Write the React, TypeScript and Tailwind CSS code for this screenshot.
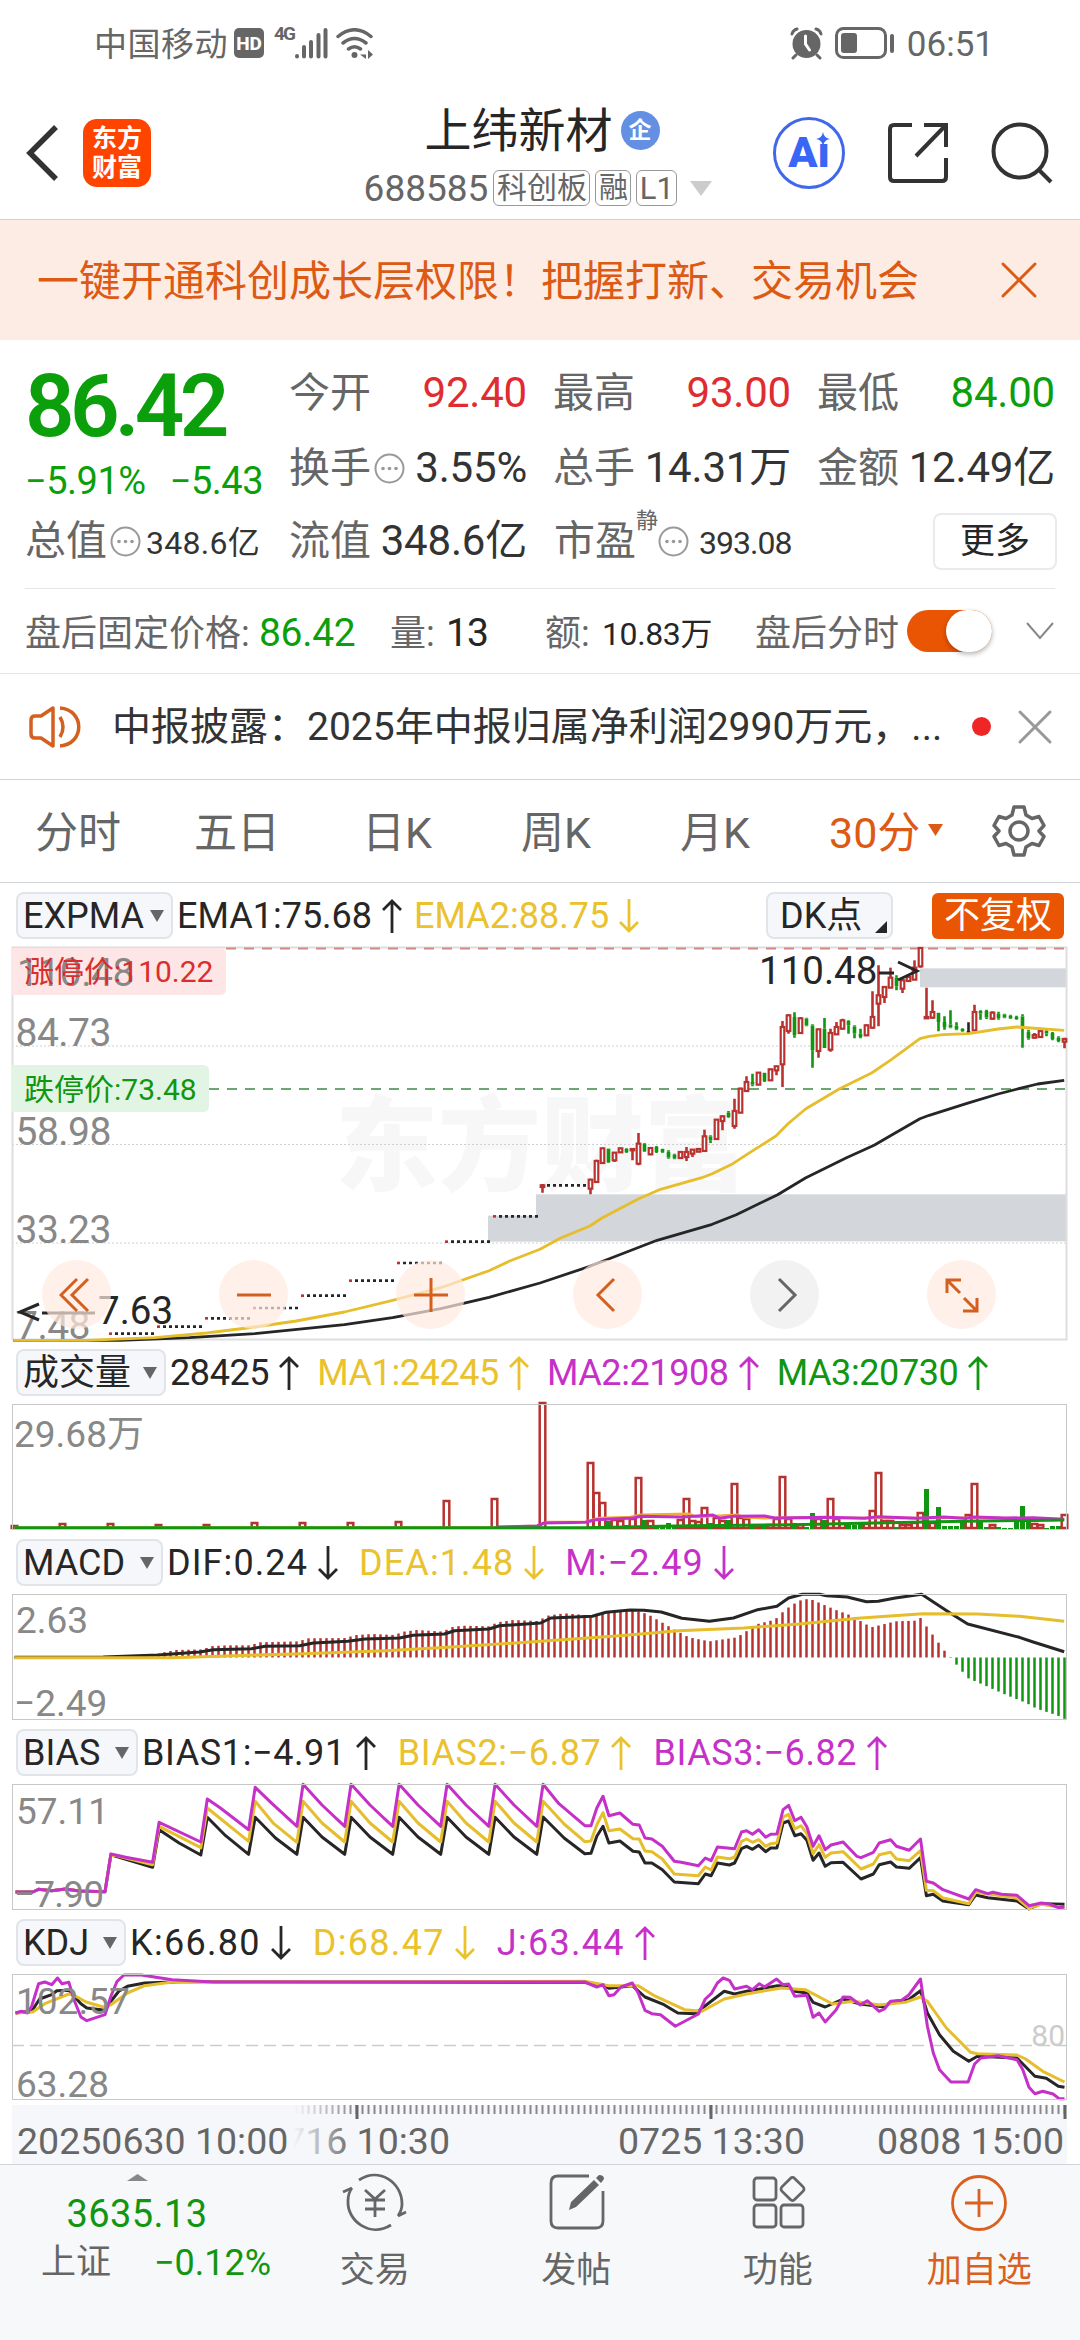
import type { ReactNode } from "react";
import { X } from "lucide-react";

type Point = [number, number];

const RED = "#b83330";
const GREEN = "#109610";
const BLACK = "#262626";
const YELLOW = "#e6bd2a";
const PURPLE = "#c531c8";

// chart data is kept on a fine grid, 3136 units wide and 3 units per pixel high
const gx = (x: number) => x / 2.9037 - 12;
const line = (points: Point[], top: number) =>
    points.map(([x, y]) => `${gx(x).toFixed(1)},${((y - top) / 3).toFixed(1)}`).join(" ");
const right = (points: Point[]): Point[] => points.map(([x, y]) => [x + 1568, y]);
const wide = (points: Point[]): Point[] => points.map(([x, y]) => [x * 2, y]);
const barX = (i: number) => 2.5 + i * 6;

// index, colour, high, body top, body bottom, low
const candles: [number, string, number, number, number, number][] = [
    [88, "r", 912, 915, 920, 937], [96, "r", 895, 898, 925, 942], [97, "r", 838, 842, 905, 905],
    [98, "r", 802, 804, 848, 848], [99, "g", 805, 805, 846, 848], [100, "r", 815, 817, 840, 845],
    [101, "r", 802, 804, 816, 816], [102, "g", 804, 806, 816, 818], [103, "r", 805, 806, 810, 840],
    [104, "r", 758, 790, 850, 855], [105, "g", 788, 790, 813, 815], [106, "r", 800, 803, 822, 825],
    [107, "g", 797, 800, 815, 818], [108, "g", 805, 806, 816, 818], [109, "g", 810, 814, 832, 835],
    [110, "g", 820, 823, 834, 837], [111, "r", 812, 815, 833, 835], [112, "r", 800, 815, 830, 842],
    [113, "r", 806, 808, 820, 830], [114, "r", 804, 806, 814, 816], [115, "r", 748, 768, 812, 812],
    [116, "g", 765, 768, 780, 788], [117, "r", 716, 718, 776, 776], [118, "r", 705, 708, 722, 750],
    [119, "g", 692, 697, 710, 712], [120, "r", 655, 692, 737, 745], [121, "r", 622, 625, 697, 697],
    [122, "r", 588, 605, 632, 635], [123, "g", 580, 605, 613, 618], [124, "r", 575, 577, 613, 613],
    [125, "g", 577, 578, 602, 605], [126, "r", 565, 567, 600, 600], [127, "r", 556, 558, 570, 585],
    [128, "r", 422, 440, 552, 620], [129, "r", 402, 405, 452, 460], [130, "g", 396, 410, 465, 472],
    [131, "r", 410, 414, 458, 458], [132, "g", 412, 414, 436, 438], [133, "g", 432, 435, 510, 562],
    [134, "r", 445, 447, 512, 532], [135, "g", 413, 445, 503, 503], [136, "r", 445, 458, 508, 514],
    [137, "r", 425, 440, 462, 462], [138, "r", 415, 420, 445, 448], [139, "g", 420, 422, 435, 460],
    [140, "g", 435, 438, 460, 474], [141, "g", 445, 460, 470, 474], [142, "r", 432, 435, 465, 465],
    [143, "r", 333, 410, 442, 445], [144, "r", 255, 345, 370, 438], [145, "r", 318, 320, 350, 368],
    [146, "r", 262, 292, 322, 322], [147, "g", 285, 292, 318, 330], [148, "r", 295, 300, 325, 338],
    [149, "r", 285, 290, 302, 305], [150, "r", 240, 262, 298, 298], [151, "r", 202, 203, 258, 262],
    [152, "r", 322, 410, 414, 416], [153, "r", 360, 395, 412, 415], [154, "g", 397, 398, 425, 453],
    [155, "g", 408, 425, 440, 448], [156, "g", 390, 432, 442, 444], [157, "g", 426, 436, 448, 450],
    [158, "g", 444, 446, 452, 454], [159, "k", 426, 452, 456, 458], [160, "r", 373, 395, 450, 453],
    [161, "g", 390, 392, 400, 418], [162, "g", 388, 392, 412, 416], [163, "r", 393, 397, 415, 418],
    [164, "g", 394, 400, 414, 418], [165, "g", 400, 402, 412, 414], [166, "g", 403, 406, 414, 416],
    [167, "g", 406, 410, 416, 418], [168, "g", 402, 408, 440, 502], [169, "g", 448, 454, 474, 478],
    [170, "r", 458, 464, 472, 475], [171, "r", 450, 452, 470, 472], [172, "g", 450, 452, 460, 468],
    [173, "g", 455, 458, 476, 480], [174, "g", 468, 472, 482, 486], [175, "r", 472, 476, 484, 504],
];

// first bar of each limit-up day and the level it stays on
const steps: Point[] = [
    [16, 1360], [24, 1339], [32, 1314], [40, 1283], [48, 1246], [56, 1201], [64, 1148], [72, 1084], [80, 1008], [88, 915],
];

const ema1: Point[] = [
    [38, 1380], [350, 1380], [550, 1372], [740, 1360], [1000, 1333], [1140, 1312], [1280, 1285], [1420, 1251], [1568, 1208],
    ...right([[145, 1158], [340, 1080], [500, 1032], [570, 1003], [690, 943], [772, 892], [890, 832], [970, 795], [1020, 765], [1103, 715], [1130, 705], [1240, 669], [1330, 641], [1390, 625], [1445, 611], [1522, 600]]),
];
const ema2: Point[] = [
    [38, 1380], [250, 1380], [450, 1372], [600, 1358], [740, 1340], [860, 1322], [1000, 1295], [1140, 1260], [1280, 1222], [1420, 1171], [1480, 1142], [1555, 1112],
    ...right([[0, 1107], [60, 1073], [145, 1037], [180, 1013], [285, 956], [350, 927], [470, 892], [500, 880], [560, 850], [600, 823], [685, 767], [720, 730], [772, 685], [870, 625], [963, 578], [1020, 538], [1103, 475], [1130, 468], [1170, 463], [1245, 460], [1330, 446], [1385, 440], [1522, 450]]),
];

const volumes: [number, string, number][] = [
    [0, "r", 2], [8, "r", 4], [16, "r", 4], [24, "r", 3], [32, "r", 3], [40, "r", 5], [48, "r", 5], [56, "r", 5], [64, "r", 6],
    [72, "r", 27], [80, "r", 29], [88, "r", 125], [96, "r", 65], [97, "r", 35], [98, "r", 25], [99, "g", 8], [100, "r", 8],
    [101, "r", 7], [102, "g", 4], [103, "r", 9], [104, "r", 50], [105, "g", 9], [106, "r", 7], [107, "g", 3], [108, "g", 3],
    [109, "g", 6], [110, "g", 3], [111, "r", 8], [112, "r", 29], [113, "r", 7], [114, "r", 6], [115, "r", 20], [116, "g", 6],
    [117, "r", 10], [118, "r", 7], [119, "g", 9], [120, "r", 44], [121, "r", 10], [122, "r", 9], [123, "g", 4], [124, "r", 2],
    [125, "g", 4], [126, "r", 3], [127, "r", 9], [128, "r", 51], [129, "r", 9], [130, "g", 6], [131, "r", 3], [132, "g", 2],
    [133, "g", 16], [134, "r", 9], [135, "g", 9], [136, "r", 29], [137, "r", 9], [138, "r", 4], [139, "g", 5], [140, "g", 4],
    [141, "g", 5], [142, "r", 4], [143, "r", 17], [144, "r", 55], [145, "r", 7], [146, "r", 7], [147, "g", 2], [148, "r", 3],
    [149, "r", 3], [150, "r", 5], [151, "r", 15], [152, "g", 40], [153, "r", 5], [154, "g", 22], [155, "g", 3], [156, "g", 3],
    [157, "g", 3], [158, "g", 9], [159, "r", 13], [160, "r", 44], [161, "g", 9], [162, "g", 2], [163, "r", 3], [164, "g", 2],
    [165, "g", 1], [166, "g", 1], [167, "g", 7], [168, "g", 23], [169, "g", 7], [170, "r", 4], [171, "r", 3], [172, "g", 1],
    [173, "g", 3], [174, "g", 3], [175, "r", 13],
];
const volMa1 = wide([[21, 549], [720, 548], [782, 543], [795, 532], [850, 531], [870, 520], [915, 517], [930, 510], [1000, 507], [1010, 517], [1070, 510], [1080, 518], [1110, 521], [1135, 519], [1300, 520], [1430, 519], [1490, 522], [1545, 524]]);
const volMa2 = wide([[720, 547], [780, 544], [790, 535], [850, 533], [865, 525], [920, 520], [930, 515], [990, 517], [1035, 511], [1045, 521], [1065, 515], [1110, 514], [1125, 520], [1200, 518], [1255, 521], [1275, 516], [1330, 521], [1370, 517], [1400, 521], [1415, 517], [1460, 520], [1500, 519], [1545, 524]]);
const volMa3 = wide([[21, 549], [850, 549], [1000, 543], [1150, 540], [1250, 536], [1400, 530], [1545, 526]]);

const macdBars: Point[] = [
    [150, 938], [160, 935], [225, 930], [240, 922], [255, 916], [298, 914], [302, 905], [330, 902], [365, 902], [375, 893], [435, 890], [445, 881], [505, 880], [512, 872], [540, 868], [575, 871], [582, 862], [605, 856], [645, 861], [652, 849], [670, 843], [710, 845], [722, 833], [745, 826], [780, 829], [797, 812], [820, 806], [855, 812], [880, 802], [920, 797], [940, 808], [975, 850], [1000, 878], [1030, 890], [1070, 878], [1100, 838], [1125, 825], [1140, 795], [1160, 768], [1175, 762], [1190, 775], [1215, 797], [1235, 812], [1265, 848], [1300, 830], [1330, 828], [1338, 818], [1345, 845], [1370, 915], [1380, 940], [1390, 963], [1405, 1000], [1425, 1018], [1460, 1050], [1490, 1075], [1505, 1092], [1535, 1112], [1548, 1125],
];
const dif = wide([[21, 938], [150, 937], [229, 931], [290, 922], [310, 915], [365, 912], [385, 905], [435, 903], [455, 895], [505, 890], [530, 883], [580, 880], [600, 872], [645, 868], [660, 858], [710, 853], [725, 843], [785, 835], [800, 820], [860, 815], [880, 803], [915, 796], [935, 797], [960, 802], [990, 821], [1030, 830], [1065, 820], [1100, 795], [1128, 785], [1145, 760], [1165, 749], [1190, 749], [1200, 753], [1230, 757], [1258, 771], [1275, 770], [1300, 760], [1338, 749], [1380, 806], [1405, 838], [1480, 878], [1500, 892], [1545, 921]]);
const dea = wide([[21, 939], [250, 939], [340, 933], [440, 927], [560, 918], [650, 908], [785, 890], [900, 873], [985, 858], [1080, 850], [1160, 838], [1250, 820], [1340, 807], [1420, 808], [1480, 815], [1545, 830]]);

const teeth = (peak: number, mid: number, low: number): Point[] =>
    [0, 1, 2, 3, 4].flatMap((n): Point[] => [
        [880 + n * 139.4, peak],
        [935 + n * 139.4, mid],
        [1001 + n * 139.4, low],
    ]);
const biasStart: Point[] = [[45, 487], [95, 487], [112, 479], [150, 483], [190, 478], [230, 484], [305, 486]];
const bias1: Point[] = [
    ...biasStart, [322, 375], [443, 413], [462, 300], [520, 340], [583, 376], [602, 263], [655, 318], [722, 374], [741, 263], [800, 325], [862, 374],
    ...teeth(263, 322, 374),
    ...right([[9, 262], [70, 325], [130, 372], [148, 371], [165, 320], [183, 290], [200, 340], [232, 334], [270, 365], [288, 367], [305, 400], [325, 400], [355, 420], [390, 457], [460, 462], [480, 433], [497, 438], [515, 400], [550, 406], [565, 400], [585, 357], [600, 350], [617, 359], [635, 347], [655, 366], [670, 355], [688, 355], [706, 280], [722, 274], [740, 318], [758, 312], [775, 332], [793, 392], [810, 370], [828, 410], [845, 399], [880, 398], [932, 448], [968, 433], [985, 405], [1018, 397], [1035, 412], [1072, 416], [1105, 384], [1122, 498], [1142, 494], [1170, 514], [1245, 525], [1265, 496], [1300, 504], [1385, 514], [1420, 538], [1455, 522], [1523, 524]]),
];
const bias2: Point[] = [
    ...biasStart, [322, 374], [443, 405], [462, 290], [583, 354], [602, 235], [722, 335], [741, 215], [795, 282], [862, 338],
    ...teeth(215, 280, 337),
    ...right([[9, 215], [70, 283], [130, 336], [148, 334], [165, 285], [183, 249], [200, 303], [232, 298], [270, 327], [288, 328], [305, 364], [325, 366], [355, 388], [390, 433], [460, 438], [480, 412], [497, 421], [515, 382], [550, 387], [565, 383], [585, 335], [600, 328], [617, 338], [635, 330], [655, 350], [670, 342], [688, 340], [706, 262], [722, 254], [740, 298], [758, 288], [775, 312], [793, 372], [810, 345], [828, 383], [845, 370], [880, 366], [932, 418], [968, 403], [985, 375], [1018, 368], [1035, 388], [1072, 393], [1105, 363], [1122, 482], [1142, 483], [1170, 505], [1245, 522], [1265, 488], [1385, 505], [1420, 536], [1455, 524], [1523, 534]]),
];
const bias3: Point[] = [
    ...biasStart, [322, 373], [365, 383], [443, 398], [462, 278], [583, 337], [602, 208], [640, 235], [722, 300], [741, 173], [790, 222], [862, 290],
    ...teeth(164, 226, 290),
    ...right([[9, 164], [55, 222], [130, 288], [148, 288], [165, 235], [183, 200], [200, 258], [232, 250], [270, 284], [288, 286], [305, 325], [325, 328], [355, 350], [390, 395], [410, 398], [460, 408], [480, 385], [497, 393], [515, 352], [565, 357], [585, 307], [600, 303], [617, 314], [635, 300], [655, 323], [670, 314], [688, 313], [706, 240], [722, 227], [740, 273], [758, 263], [775, 292], [793, 350], [810, 318], [828, 360], [845, 346], [880, 337], [920, 380], [932, 384], [968, 368], [985, 340], [1018, 330], [1035, 350], [1072, 362], [1105, 328], [1122, 455], [1142, 460], [1170, 480], [1245, 508], [1265, 480], [1300, 492], [1315, 488], [1340, 494], [1385, 497], [1420, 528], [1455, 520], [1475, 522], [1505, 534], [1523, 532]]),
];

const kLine: Point[] = [
    [45, 850], [92, 845], [115, 808], [150, 795], [165, 783], [200, 782], [235, 822], [252, 835], [305, 842], [322, 815], [345, 785], [370, 770], [420, 760], [520, 756],
    ...right([[130, 758], [165, 767], [183, 765], [200, 776], [235, 772], [268, 768], [305, 802], [360, 825], [400, 850], [450, 852], [480, 828], [535, 785], [565, 793], [600, 785], [690, 768], [722, 770], [740, 785], [775, 790], [793, 818], [828, 832], [880, 808], [930, 823], [1000, 832], [1018, 817], [1070, 810], [1105, 783], [1125, 850], [1160, 915], [1200, 965], [1245, 995], [1270, 980], [1385, 985], [1437, 1040], [1470, 1046], [1505, 1070], [1523, 1073]]),
];
const dLine: Point[] = [
    [45, 850], [95, 847], [130, 822], [200, 793], [215, 797], [250, 817], [300, 832], [322, 825], [370, 790], [420, 768], [500, 757],
    ...right([[130, 755], [200, 768], [285, 768], [330, 797], [420, 840], [470, 845], [535, 808], [600, 793], [700, 775], [770, 780], [850, 823], [910, 815], [985, 826], [1060, 818], [1105, 802], [1125, 815], [1180, 895], [1250, 968], [1270, 972], [1385, 976], [1410, 988], [1460, 1025], [1523, 1057]]),
];
const jLine: Point[] = [
    [45, 850], [62, 845], [80, 850], [92, 830], [112, 762], [130, 757], [150, 765], [167, 745], [180, 762], [200, 758], [215, 810], [235, 862], [252, 873], [305, 855], [322, 800], [340, 755], [360, 736], [410, 736], [500, 750], [620, 757],
    ...right([[130, 757], [165, 772], [183, 765], [200, 798], [215, 795], [235, 772], [268, 760], [285, 790], [305, 842], [325, 852], [350, 855], [393, 890], [460, 853], [480, 808], [497, 792], [515, 760], [532, 745], [550, 752], [565, 778], [600, 770], [617, 780], [637, 762], [652, 772], [687, 748], [705, 765], [722, 763], [740, 800], [775, 797], [793, 863], [810, 850], [828, 877], [860, 840], [880, 802], [900, 803], [930, 826], [950, 813], [985, 845], [1000, 838], [1018, 815], [1050, 812], [1070, 797], [1105, 748], [1125, 890], [1142, 970], [1160, 1020], [1193, 1057], [1243, 1057], [1262, 1003], [1280, 985], [1330, 978], [1385, 990], [1402, 1020], [1420, 1073], [1437, 1092], [1460, 1085], [1490, 1093], [1507, 1107], [1523, 1107]]),
];

function macdAt(i: number) {
    const x = 21.05 + i * 8.711;
    const n = macdBars.findIndex((p) => p[0] >= x);
    if (n <= 0) return 939;
    const [x0, y0] = macdBars[n - 1];
    const [x1, y1] = macdBars[n];
    return y0 + ((y1 - y0) * (x - x0)) / (x1 - x0);
}

function Arrow({ down }: { down?: boolean }) {
    return (
        <svg className="ml-[10px] h-[34px] w-5" viewBox="0 0 20 34" fill="none" stroke="currentColor" strokeWidth="2.800">
            {down ? <path d="M10 0v32M1 23l9 9 9-9" /> : <path d="M10 34V2M1 11l9-9 9 9" />}
        </svg>
    );
}

function Dots() {
    return (
        <svg className="h-[31px] w-[31px]" viewBox="0 0 31 31" fill="none" stroke="#999" strokeWidth="2">
            <circle cx="15.5" cy="15.5" r="14" />
            <g fill="#999" stroke="none">
                <circle cx="9" cy="15.5" r="1.8" />
                <circle cx="15.5" cy="15.5" r="1.8" />
                <circle cx="22" cy="15.5" r="1.8" />
            </g>
        </svg>
    );
}

function Caret({ className }: { className: string }) {
    return (
        <svg className={className} viewBox="0 0 14 12" fill="currentColor" preserveAspectRatio="none">
            <path d="M0 0h14L7 12z" />
        </svg>
    );
}

type Reading = { text: string; color: string; down?: boolean };

function IndicatorBar({ name, width, gap, readings, children }: { name: string; width: string; gap: string; readings: Reading[]; children?: ReactNode }) {
    return (
        <div className="flex h-16 items-center pl-4 pt-px text-[36px] leading-none text-[#262626]">
            <div className={`flex h-[47px] items-center justify-between rounded-lg border-2 border-[#e1e4e8] bg-[#f6f7fa] pl-[5px] pr-[7px] ${width}`}>
                <span>{name}</span>
                <Caret className="h-3 w-3.5 text-[#666]" />
            </div>
            <div className={`ml-1 flex items-center ${gap}`}>
                {readings.map((r) => (
                    <div key={r.text} className={`flex items-center ${r.color}`}>
                        <span>{r.text}</span>
                        <Arrow down={r.down} />
                    </div>
                ))}
            </div>
            {children}
        </div>
    );
}

function Panel({ children }: { children: ReactNode }) {
    return (
        <svg className="ml-3 block h-[126px] w-[1055px] overflow-visible text-[37px]" viewBox="0 0 1055 126">
            {children}
            <rect x="0.5" y="0.5" width="1054" height="125" fill="none" stroke="#c8c8c8" />
        </svg>
    );
}

function Curve({ points, top, color, width = 3 }: { points: Point[]; top: number; color: string; width?: number }) {
    return <polyline points={line(points, top)} fill="none" stroke={color} strokeWidth={width} strokeLinejoin="round" />;
}

function StatusBar() {
    return (
        <div className="flex h-[86px] items-center justify-between pl-[94px] pr-[86px] text-[33px] leading-none text-[#666]">
            <div className="flex items-center">
                <span className="pt-0.5 tracking-[0.5px]">中国移动</span>
                <span className="ml-1.5 flex h-[30px] w-[30px] items-center justify-center rounded-[5px] bg-[#666] text-[19px] font-extrabold text-white">HD</span>
                <span className="mb-5 ml-2.5 text-[19px] font-bold tracking-[-2px]">4G</span>
                <svg className="h-[31px] w-[34px]" viewBox="0 0 34 31" stroke="currentColor" strokeWidth="4" strokeLinecap="round">
                    <path d="M3 28v.5M10 19v9.5M17 14v14.5M24.500 7v21.500M31.500 2v26.500" />
                </svg>
                <svg className="ml-2 h-[31px] w-[37px]" viewBox="0 0 37 31" fill="none" stroke="currentColor" strokeWidth="3.500" strokeLinecap="round">
                    <path d="M2 8.500Q18.500-5 35 8.500M7 15q11.500-9 23 0M12.500 21q6-4.500 12 0" />
                    <circle cx="18.500" cy="27" r="3" fill="currentColor" stroke="none" />
                    <path d="M30 22v9l-6-4.500h6M32 31v-9l5 4.500z" fill="currentColor" stroke="none" />
                </svg>
            </div>
            <div className="flex items-center">
                <svg className="h-[33px] w-[33px]" viewBox="0 0 33 33" fill="none" stroke="currentColor" strokeWidth="3" strokeLinecap="round">
                    <circle cx="16.500" cy="17" r="14" fill="currentColor" stroke="none" />
                    <path d="M2 7q1-4 5-5M31 7q-1-4-5-5M6 28l-3 3M27 28l3 3" />
                    <path d="M15.500 9v8l4 6" stroke="white" />
                </svg>
                <svg className="ml-[12px] h-[33px] w-[60px]" viewBox="0 0 60 33">
                    <rect x="1.500" y="1.500" width="49" height="29" rx="7" fill="none" stroke="currentColor" strokeWidth="3" />
                    <rect x="6" y="6" width="16" height="20" rx="3" fill="currentColor" />
                    <path d="M57 9v15" stroke="currentColor" strokeWidth="4" strokeLinecap="round" />
                </svg>
                <span className="ml-3 pt-0.5 text-[35px]">06:51</span>
            </div>
        </div>
    );
}

function Header() {
    return (
        <header className="flex h-[134px] items-center border-b border-[#d0d3d6] pl-[26px] pr-[27px]">
            <svg className="h-14 w-8" viewBox="0 0 32 56" fill="none" stroke="#333" strokeWidth="5.500">
                <path d="M30 2 4 28l26 26" />
            </svg>
            <div className="ml-[25px] flex h-[68px] w-[68px] flex-col items-center justify-center rounded-[14px] bg-[#ff4400] text-[25px] font-bold leading-[29px] text-white">
                <span>东方</span>
                <span>财富</span>
            </div>
            <div className="ml-[212px] flex w-[350px] flex-col items-center pt-2">
                <div className="flex items-center text-[47px] leading-none text-[#262626]">
                    <span className="ml-[8px]">上纬新材</span>
                    <span className="ml-2 flex h-[39px] w-[39px] items-center justify-center rounded-full bg-[#6490e4] text-[23px] font-bold text-white">企</span>
                </div>
                <div className="mt-4 flex items-center gap-[5px] text-[37px] leading-none text-[#666]">
                    <span>688585</span>
                    <span className="flex h-9 w-[97px] items-center justify-center rounded-md border border-[#999] text-[30px]">科创板</span>
                    <span className="flex h-9 w-9 items-center justify-center rounded-md border border-[#999] text-[29px]">融</span>
                    <span className="flex h-9 w-[41px] items-center justify-center rounded-md border border-[#999] text-[31px]">L1</span>
                    <Caret className="ml-2 h-[15px] w-[22px] text-[#ccc]" />
                </div>
            </div>
            <div className="relative ml-auto flex h-[72px] w-[72px] items-center justify-center rounded-full border-[3px] border-[#4168e8] text-[43px] font-black leading-none text-[#3a66f5]">
                <span>Aı</span>
                <svg className="absolute right-[12px] top-[12px] h-3.5 w-3.5" viewBox="0 0 14 14" fill="currentColor">
                    <path d="M7 0q1 6 7 7-6 1-7 7-1-6-7-7 6-1 7-7z" />
                </svg>
            </div>
            <svg className="ml-[43px] h-[60px] w-[60px]" viewBox="0 0 60 60" fill="none" stroke="#333" strokeWidth="4">
                <path d="M24 2H6Q2 2 2 6v48q0 4 4 4h48q4 0 4-4V35M36 2h22v22M58 2 28 33" />
            </svg>
            <svg className="ml-[43px] h-[62px] w-[62px]" viewBox="0 0 62 62" fill="none" stroke="#333" strokeWidth="4">
                <circle cx="29" cy="29" r="26.500" />
                <path d="M48 48l12 12" />
            </svg>
        </header>
    );
}

function Cell({ label, value, color = "text-[#333]", dots }: { label: string; value: string; color?: string; dots?: boolean }) {
    return (
        <div className="flex w-[238px] items-center justify-between">
            <span className="flex items-center gap-[3px] text-[41px] text-[#666]">
                {label}
                {dots && <Dots />}
            </span>
            <span className={`text-[42px] tracking-[-0.2px] ${color}`}>{value}</span>
        </div>
    );
}

function Quote() {
    return (
        <section className="mx-[25px] h-[249px] border-b border-[#e6e6e6] leading-none">
            <div className="flex h-[164px]">
                <div className="w-[264px] pt-[22px] text-[#0b9f0b]">
                    <div className="text-[87px] font-semibold leading-[88px] tracking-[-4.8px]">86.42</div>
                    <div className="mt-3 flex justify-between pr-[26px] text-[38px] tracking-[-0.5px]">
                        <span>−5.91%</span>
                        <span>−5.43</span>
                    </div>
                </div>
                <div className="flex flex-1 flex-wrap content-start justify-between gap-y-[33px] pt-8">
                    <Cell label="今开" value="92.40" color="text-[#e02c30]" />
                    <Cell label="最高" value="93.00" color="text-[#e02c30]" />
                    <Cell label="最低" value="84.00" color="text-[#0b9f0b]" />
                    <Cell label="换手" value="3.55%" dots />
                    <Cell label="总手" value="14.31万" />
                    <Cell label="金额" value="12.49亿" />
                </div>
            </div>
            <div className="flex h-[74px] items-center text-[41px] text-[#666]">
                <div className="flex w-[264px] items-center gap-[3px]">
                    总值
                    <Dots />
                    <span className="ml-0.5 pt-1 text-[32px] tracking-[0.3px] text-[#333]">348.6亿</span>
                </div>
                <Cell label="流值" value="348.6亿" />
                <div className="ml-[27px] flex items-center">
                    市盈
                    <span className="mb-10 text-[22px]">静</span>
                    <Dots />
                    <span className="ml-2.5 pt-1 text-[32px] tracking-[-1px] text-[#333]">393.08</span>
                </div>
                <button className="ml-auto mr-[-2px] flex h-[57px] w-[124px] items-center justify-center rounded-lg border-2 border-[#e8eaed] text-[35px] text-[#262626]">更多</button>
            </div>
        </section>
    );
}

function AfterHours() {
    return (
        <section className="flex h-[85px] items-center border-b border-[#e6e6e6] pl-[25px] text-[36px] leading-none text-[#666]">
            <div className="flex items-center pt-[5px]">
                <span className="w-[234px]">盘后固定价格:</span>
                <span className="w-[131px] text-[39px] tracking-[-0.3px] text-[#0b9f0b]">86.42</span>
                <span className="w-[56px]">量:</span>
                <span className="w-[99px] text-[39px] tracking-[-1px] text-[#262626]">13</span>
                <span className="w-[57px]">额:</span>
                <span className="w-[153px] text-[32px] tracking-[-0.4px] text-[#262626]">10.83万</span>
                <span>盘后分时</span>
            </div>
            <span className="ml-2 flex h-[42px] w-[85px] justify-end rounded-full bg-[#ea5504]">
                <span className="h-[42px] w-[46px] rounded-full bg-white shadow-[0_2px_5px_rgba(0,0,0,0.3)]" />
            </span>
            <svg className="ml-[34px] h-[18px] w-7" viewBox="0 0 28 18" fill="none" stroke="#888" strokeWidth="2">
                <path d="M1 1l13 15L27 1" />
            </svg>
        </section>
    );
}

function News() {
    return (
        <section className="flex h-[106px] items-center border-b border-[#d0d3d6] pl-[29px] pr-[15px] text-[39px] leading-none text-[#333]">
            <svg className="h-11 w-[52px]" viewBox="0 0 52 44" fill="none" stroke="#d3601f" strokeWidth="3.500" strokeLinejoin="round">
                <path d="M24 3v38L12 33H6q-4 0-4-4V15q0-4 4-4h6z" />
                <path d="M31 12q6 10 0 20M31 3c25 2 25 36 0 38" />
            </svg>
            <span className="ml-[31px] pt-0.5">中报披露：2025年中报归属净利润2990万元，...</span>
            <span className="ml-auto h-[19px] w-[19px] rounded-full bg-[#f02626]" />
            <X className="ml-[14px] h-[60px] w-[60px] text-[#999]" strokeWidth={1.2} />
        </section>
    );
}

function Tabs() {
    return (
        <nav className="flex h-[103px] items-center border-b border-[#d0d3d6] pl-[35px] pr-[34px] text-[43px] leading-none text-[#666]">
            <div className="flex items-center pt-[5px]">
                <span className="w-[159px]">分时</span>
                <span className="w-[168px]">五日</span>
                <span className="w-[159px]">日K</span>
                <span className="w-[159px]">周K</span>
                <span className="w-[149px]">月K</span>
                <span className="flex items-center text-[#dd5a14]">
                    30分
                    <Caret className="mb-2 ml-2 h-3 w-[15px]" />
                </span>
            </div>
            <svg className="ml-auto h-[54px] w-[54px]" viewBox="0 0 54 54" fill="none" stroke="currentColor" strokeWidth="3.500" strokeLinejoin="round">
                <path d="M22 3h10l2 8 6 3.500 7-2 5 9-5 5.500 5 5.500-5 9-7-2-6 3.500-2 8H22l-2-8-6-3.500-7 2-5-9L7 27l-5-5.500 5-9 7 2 6-3.500z" />
                <circle cx="27" cy="27" r="9" />
            </svg>
        </nav>
    );
}

function ToolButton({ gray, children }: { gray?: boolean; children: ReactNode }) {
    return (
        <div className={`flex h-[69px] w-[69px] items-center justify-center rounded-full ${gray ? "bg-[#f2f2f2] text-[#666]" : "bg-[#ffe9df]/70 text-[#d3601f]"}`}>
            <svg className="h-9 w-9" viewBox="0 0 36 36" fill="none" stroke="currentColor" strokeWidth="3">
                {children}
            </svg>
        </div>
    );
}

function PriceChart() {
    const y = (v: number) => (v - 200) / 3;
    return (
        <div className="relative ml-3 h-[393px] w-[1055px]">
            <svg className="block h-[393px] w-[1055px] overflow-visible" viewBox="0 0 1055 393">
                <text x="323" y="236" fontSize="103" fontWeight="800" fill="#f7f7f7">东方财富</text>
                <g fill="#d3d6db">
                    <rect x="476" y={y(1006)} width="60" height="26" />
                    <rect x="524" y={y(942)} width="531" height="47" />
                    <rect x="908" y={y(264)} width="147" height="19" />
                </g>
                <path d="M0 99H1055M0 197.500H1055M0 296H1055" stroke="#d0d0d0" strokeDasharray="2 2" />
                <rect x="0.5" y="0.5" width="1054" height="392" fill="none" stroke="#dedede" strokeWidth="2" />
                <path d="M214 1.500H1055" stroke="#cf8a88" strokeWidth="2" strokeDasharray="10 8" />
                <path d="M197 142H1055" stroke="#3c8a46" strokeWidth="1.500" strokeDasharray="10 8" />
                {steps.map(([i, v]) => (
                    <g key={i}>
                        <rect x={barX(i) - 1.5} y={y(v) - 1.3} width="3" height="2.600" fill={RED} />
                        <path d={`M${barX(i) + 4.5} ${y(v)}h40`} stroke={BLACK} strokeWidth="2.600" strokeDasharray="3 3" />
                    </g>
                ))}
                {candles.map(([i, c, high, top, bottom, low]) => {
                    const x = barX(i);
                    const color = c === "r" ? RED : c === "g" ? GREEN : BLACK;
                    return (
                        <g key={i} stroke={color} strokeWidth="2.200">
                            <path d={`M${x} ${y(high)}V${y(top)}M${x} ${y(bottom)}V${y(low)}`} strokeWidth="2.600" />
                            {c === "r" ? (
                                <rect x={x - 1.8} y={y(top)} width="3.600" height={Math.max(1, y(bottom) - y(top))} fill="white" />
                            ) : (
                                <path d={`M${x} ${y(top)}V${y(bottom)}`} strokeWidth="3.600" />
                            )}
                        </g>
                    );
                })}
                <Curve points={ema1} top={200} color={BLACK} width={2.8} />
                <Curve points={ema2} top={200} color={YELLOW} width={2.8} />
                <path d="M0 1h208q6 0 6 6v35q0 6-6 6H0z" fill="#ffe6e6" />
                <path d="M0 118h191q6 0 6 6v35q0 6-6 6H0z" fill="#e2f4e4" />
                <g fill="#888" fontSize="39" letterSpacing="-0.5">
                    <text x="5" y="39">110.48</text>
                    <text x="3.500" y="99">84.73</text>
                    <text x="3.500" y="198">58.98</text>
                    <text x="3.500" y="296">33.23</text>
                    <text x="4" y="391.500">7.48</text>
                </g>
                <text x="12" y="35" fontSize="30" fill="#d92e2e">涨停价:110.22</text>
                <text x="12" y="153" fontSize="30" fill="#109610">跌停价:73.48</text>
                <g fill="#262626" fontSize="38.500">
                    <text x="747" y="37">110.48</text>
                    <text x="86" y="377">7.63</text>
                </g>
                <path d="M867 26h15M886 15l19 9-19 9M27 357l-19 8 19 8M30 366h53" fill="none" stroke="#262626" strokeWidth="3" />
            </svg>
            <div className="absolute left-[30px] right-[71px] top-[313px] flex justify-between">
                <ToolButton>
                    <path d="M18 2 2 18l16 16M29 2 13 18l16 16" />
                </ToolButton>
                <ToolButton>
                    <path d="M1 18h34" />
                </ToolButton>
                <ToolButton>
                    <path d="M1 18h34M18 1v34" />
                </ToolButton>
                <ToolButton>
                    <path d="M24 2 8 18l16 16" />
                </ToolButton>
                <ToolButton gray>
                    <path d="M12 2l16 16-16 16" />
                </ToolButton>
                <ToolButton>
                    <path d="M3 16V3h14M3 3l13 13M33 21v13H19M33 34 20 21" />
                </ToolButton>
            </div>
        </div>
    );
}

function Charts() {
    const indices = Array.from({ length: 176 }, (_, i) => i);
    return (
        <main>
            <IndicatorBar
                name="EXPMA"
                width="w-[157px]"
                gap="gap-[12px]"
                readings={[
                    { text: "EMA1:75.68", color: "text-[#262626]" },
                    { text: "EMA2:88.75", color: "text-[#e9c22e]", down: true },
                ]}
            >
                <div className="relative ml-auto flex h-[47px] w-[127px] items-center rounded-lg border-2 border-[#e1e4e8] bg-[#f6f7fa] pl-3">
                    DK点
                    <svg className="absolute bottom-1 right-1 h-3 w-3" viewBox="0 0 12 12">
                        <path d="M12 0v12H0z" fill="#262626" />
                    </svg>
                </div>
                <div className="ml-[39px] mr-4 flex h-[46px] w-[132px] items-center justify-center rounded-md bg-[#ea5504] text-white">不复权</div>
            </IndicatorBar>
            <PriceChart />

            <IndicatorBar
                name="成交量"
                width="w-[150px]"
                gap="gap-[18px] tracking-[-0.4px]"
                readings={[
                    { text: "28425", color: "text-[#262626]" },
                    { text: "MA1:24245", color: "text-[#e9c22e]" },
                    { text: "MA2:21908", color: "text-[#c531c8]" },
                    { text: "MA3:20730", color: "text-[#109610]" },
                ]}
            />
            <Panel>
                <text x="2" y="43" fill="#888">29.68万</text>
                {volumes.map(([i, c, h]) =>
                    c === "r" ? (
                        <rect key={i} x={barX(i) - 2.8} y={124 - h} width="5.600" height={h} fill="white" stroke={RED} strokeWidth="2.500" />
                    ) : (
                        <rect key={i} x={barX(i) - 2.5} y={125 - h} width="5" height={h} fill={GREEN} />
                    ),
                )}
                <Curve points={volMa1} top={178} color="#f0ac38" width={2.6} />
                <Curve points={volMa2} top={178} color={PURPLE} />
                <Curve points={volMa3} top={178} color={GREEN} />
            </Panel>

            <IndicatorBar
                name="MACD"
                width="w-[147px]"
                gap="gap-[21px] tracking-[1.1px]"
                readings={[
                    { text: "DIF:0.24", color: "text-[#262626]", down: true },
                    { text: "DEA:1.48", color: "text-[#e9c22e]", down: true },
                    { text: "M:−2.49", color: "text-[#c531c8]", down: true },
                ]}
            />
            <Panel>
                {indices.map((i) => {
                    const v = macdAt(i);
                    return <path key={i} d={`M${barX(i)} 63.500V${(v - 748) / 3}`} stroke={v < 940 ? RED : GREEN} strokeWidth="2.500" />;
                })}
                <Curve points={dif} top={748} color={BLACK} />
                <Curve points={dea} top={748} color={YELLOW} />
                <g fill="#888">
                    <text x="4" y="39">2.63</text>
                    <text x="2" y="122">−2.49</text>
                </g>
            </Panel>

            <IndicatorBar
                name="BIAS"
                width="w-[122px]"
                gap="gap-[22px] tracking-[0.6px]"
                readings={[
                    { text: "BIAS1:−4.91", color: "text-[#262626]" },
                    { text: "BIAS2:−6.87", color: "text-[#e9c22e]" },
                    { text: "BIAS3:−6.82", color: "text-[#c531c8]" },
                ]}
            />
            <Panel>
                <Curve points={bias1} top={163} color={BLACK} />
                <Curve points={bias2} top={163} color={YELLOW} />
                <Curve points={bias3} top={163} color={PURPLE} />
                <g fill="#888">
                    <text x="4" y="40">57.11</text>
                    <text x="2" y="123" textLength="90">−7.90</text>
                </g>
            </Panel>

            <IndicatorBar
                name="KDJ"
                width="w-[110px]"
                gap="gap-[22px] tracking-[1.3px]"
                readings={[
                    { text: "K:66.80", color: "text-[#262626]", down: true },
                    { text: "D:68.47", color: "text-[#e9c22e]", down: true },
                    { text: "J:63.44", color: "text-[#c531c8]" },
                ]}
            />
            <Panel>
                <path d="M0 71.500H1055" stroke="#ccc" strokeWidth="1.500" strokeDasharray="12 6" />
                <text x="1053" y="72" textAnchor="end" fontSize="30" fill="#ccc">80</text>
                <Curve points={kLine} top={733} color={BLACK} />
                <Curve points={dLine} top={733} color={YELLOW} />
                <Curve points={jLine} top={733} color={PURPLE} />
                <g fill="#888">
                    <text x="4" y="40">102.57</text>
                    <text x="4" y="123">63.28</text>
                </g>
            </Panel>

            <svg className="ml-3 mt-[5px] block h-[59px] w-[1055px] bg-[#f6f7fa]" viewBox="0 0 1055 59" fontSize="37.500" fill="#666">
                <defs>
                    <linearGradient id="fade">
                        <stop offset="0.82" stopColor="#f6f7fa" />
                        <stop offset="1" stopColor="#f6f7fa" stopOpacity="0" />
                    </linearGradient>
                </defs>
                {indices.slice(46).map((i) => (
                    <path key={i} d={`M${barX(i)} 0v9`} stroke="#888" strokeWidth="2" />
                ))}
                <path d="M345 0v14M699 0v14M1053 0v14" stroke="#666" strokeWidth="3" />
                <text x="438" y="49" textAnchor="end">0716 10:30</text>
                <rect width="343" height="59" fill="url(#fade)" />
                <text x="5" y="49">20250630 10:00</text>
                <text x="606" y="49">0725 13:30</text>
                <text x="1052" y="49" textAnchor="end">0808 15:00</text>
            </svg>
        </main>
    );
}

function NavItem({ label, color = "text-[#666]", children }: { label: string; color?: string; children: ReactNode }) {
    return (
        <div className={`flex w-[201.500px] flex-col items-center pt-[7px] ${color}`}>
            <svg className="h-[64px] w-[68px]" viewBox="0 0 68 64" fill="none" stroke="currentColor" strokeWidth="2.800">
                {children}
            </svg>
            <span className="mt-[17px] text-[35px] leading-none">{label}</span>
        </div>
    );
}

function BottomNav() {
    return (
        <footer className="flex h-[176px] border-t border-[#d0d4d8] bg-[#f6f8fa]">
            <div className="flex w-[274px] flex-col items-center leading-none">
                <Caret className="mt-[9px] h-[7px] w-[21px] rotate-180 text-[#888]" />
                <span className="mt-[14px] text-[38px] tracking-[0.4px] text-[#109610]">3635.13</span>
                <div className="mt-3 flex gap-[43px] pl-[38px] text-[35px] text-[#666]">
                    <span>上证</span>
                    <span className="text-[36px] text-[#109610]">−0.12%</span>
                </div>
            </div>
            <NavItem label="交易">
                <path d="M18 8C38-5 61 10 61 32q0 6-4 12M57 44l8-4M50 53C29 66 6 49 7 29q0-8 4-13M11 16l-9 4M24 18l10 9 10-9M34 27v18M24 28h20M24 37h20" />
            </NavItem>
            <NavItem label="发帖">
                <path d="M47 4H16q-7 0-7 7v38q0 7 7 7h38q7 0 7-7V19" />
                <path d="M27 38l2-8 23-22 5 5-23 22zM54 6l3-3q5 0 5 4l-3 4z" fill="currentColor" stroke="none" />
            </NavItem>
            <NavItem label="功能">
                <rect x="10" y="6" width="22" height="22" rx="3" />
                <rect x="10" y="33" width="22" height="22" rx="3" />
                <rect x="37" y="33" width="22" height="22" rx="3" />
                <rect x="39.500" y="8" width="18" height="18" rx="3" transform="rotate(45 48.500 17)" />
            </NavItem>
            <NavItem label="加自选" color="text-[#d9601f]">
                <circle cx="34" cy="31" r="26.500" />
                <path d="M20 31h28M34 17v28" />
            </NavItem>
        </footer>
    );
}

export default function App() {
    return (
        <div className="h-[2340px] w-[1080px] overflow-hidden bg-white font-['Roboto','Noto_Sans_CJK_SC',sans-serif]">
            <StatusBar />
            <Header />
            <div className="flex h-[120px] items-center justify-between bg-[#fcece4] pl-[37px] pr-[29px] text-[42px] leading-none text-[#dd5a14]">
                <span className="pt-[3px]">一键开通科创成长层权限！把握打新、交易机会</span>
                <X className="h-16 w-16" strokeWidth={1.1} />
            </div>
            <Quote />
            <AfterHours />
            <News />
            <Tabs />
            <Charts />
            <BottomNav />
        </div>
    );
}
